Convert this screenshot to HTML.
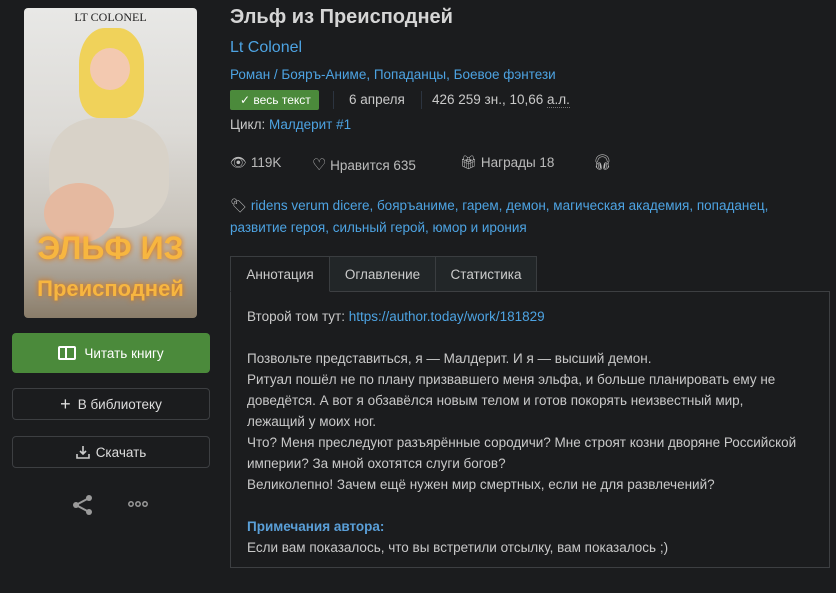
<!DOCTYPE html>
<html><head><meta charset="utf-8"><style>
*{margin:0;padding:0;box-sizing:border-box}
body{width:836px;height:593px;background:#1b1c1e;font-family:"Liberation Sans",sans-serif;color:#c9c9c9;position:relative;overflow:hidden;font-size:13.5px}
.a{position:absolute;white-space:nowrap}
a{color:#4da3e2;text-decoration:none}
.cover{left:24px;top:8px;width:173px;height:310px;border-radius:4px;background:linear-gradient(180deg,#e8e8e6 0%,#dcdad6 40%,#c9c4bc 70%,#8a7d6a 100%);overflow:hidden}
.btn{position:absolute;left:12px;width:198px;border-radius:4px;display:flex;align-items:center;justify-content:center;font-size:13.5px;color:#ddd}
.tab{position:absolute;top:256px;height:36px;border:1px solid #3a3d40;display:flex;align-items:center;justify-content:center;font-size:13.5px;color:#ccc}
.box{position:absolute;left:230px;top:291px;width:600px;height:277px;border:1px solid #3d3f42;padding:14px 16px;font-size:13.5px;line-height:21px;color:#c9c9c9}
</style></head><body>
<div class="a cover">
 <div style="position:absolute;top:2px;width:100%;text-align:center;font-family:'Liberation Serif',serif;font-size:12px;color:#222">LT COLONEL</div>
 <div style="position:absolute;left:55px;top:20px;width:65px;height:90px;border-radius:40% 40% 30% 30%;background:#f0d25a"></div>
 <div style="position:absolute;left:66px;top:40px;width:40px;height:42px;border-radius:50%;background:#f3c9b0"></div>
 <div style="position:absolute;left:25px;top:110px;width:120px;height:110px;border-radius:40%;background:#d8d2c8"></div>
 <div style="position:absolute;left:20px;top:175px;width:70px;height:60px;border-radius:50%;background:#e5b9a0"></div>
 <div style="position:absolute;top:222px;width:100%;text-align:center;font-size:32px;font-weight:bold;color:#f7b640;text-shadow:0 0 6px #e07000;line-height:36px">ЭЛЬФ ИЗ</div>
 <div style="position:absolute;top:268px;width:100%;text-align:center;font-size:22px;font-weight:bold;color:#f7b640;text-shadow:0 0 6px #e07000">Преисподней</div>
</div>
<div class="btn" style="top:333px;height:40px;background:#4b8a3b;color:#fff"><span style="display:inline-block;width:18px;height:14px;border:2px solid #fff;border-radius:2px;margin-right:8px;position:relative"><span style="position:absolute;left:5px;top:-2px;width:2px;height:14px;background:#fff"></span></span>Читать книгу</div>
<div class="btn" style="top:388px;height:32px;border:1px solid #3d3f42"><span style="font-size:18px;margin-right:7px">+</span>В библиотеку</div>
<div class="btn" style="top:436px;height:32px;border:1px solid #3d3f42"><svg width="14" height="14" viewBox="0 0 14 14" style="margin-right:6px"><path d="M7 1v8M4 6l3 3 3-3M1 9v4h12V9" stroke="#ccc" stroke-width="1.6" fill="none"/></svg>Скачать</div>
<svg class="a" style="left:72px;top:494px" width="22" height="22" viewBox="0 0 22 22"><circle cx="17" cy="4" r="3" fill="#9a9a9a"/><circle cx="4" cy="11" r="3" fill="#9a9a9a"/><circle cx="17" cy="18" r="3" fill="#9a9a9a"/><path d="M17 4L4 11l13 7" stroke="#9a9a9a" stroke-width="2" fill="none"/></svg>
<svg class="a" style="left:128px;top:500px" width="20" height="8" viewBox="0 0 20 8"><circle cx="3" cy="4" r="2.2" fill="none" stroke="#9a9a9a" stroke-width="1.5"/><circle cx="10" cy="4" r="2.2" fill="none" stroke="#9a9a9a" stroke-width="1.5"/><circle cx="17" cy="4" r="2.2" fill="none" stroke="#9a9a9a" stroke-width="1.5"/></svg>

<div class="a" style="left:230px;top:6px;font-size:20px;font-weight:bold;color:#d5d5d5">Эльф из Преисподней</div>
<div class="a" style="left:230px;top:39px;font-size:16px"><a>Lt Colonel</a></div>
<div class="a" style="left:230px;top:67px"><a>Роман / Бояръ-Аниме, Попаданцы, Боевое фэнтези</a></div>
<div class="a" style="left:230px;top:90px;width:89px;height:20px;background:#4b8a3b;border-radius:2px;color:#fff;font-size:12px;line-height:20px;padding-left:10px">✓ весь текст</div>
<div class="a" style="left:333px;top:91px;width:1px;height:18px;background:#2c3440"></div>
<div class="a" style="left:349px;top:92px">6 апреля</div>
<div class="a" style="left:421px;top:91px;width:1px;height:18px;background:#2c3440"></div>
<div class="a" style="left:432px;top:92px">426 259 зн., 10,66 <span style="border-bottom:1px dotted #777">а.л.</span></div>
<div class="a" style="left:230px;top:117px">Цикл: <a>Малдерит #1</a></div>
<div class="a" style="left:230px;top:155px;color:#bbb">👁︎ 119K</div>
<div class="a" style="left:312px;top:155px;color:#bbb"><span style="font-size:16px">♡</span> Нравится  635</div>
<div class="a" style="left:460px;top:155px;color:#bbb">🎁︎ Награды 18</div>
<div class="a" style="left:593px;top:153px;color:#bbb;font-size:15px">🎧︎</div>
<div class="a" style="left:230px;top:195px;line-height:22px"><span style="color:#bbb">🏷︎</span> <a>ridens verum dicere, бояръаниме, гарем, демон, магическая академия, попаданец,</a><br><a>развитие героя, сильный герой, юмор и ирония</a></div>

<div class="tab" style="left:230px;width:100px;background:#1b1c1e;border-bottom-color:#1b1c1e;z-index:2">Аннотация</div>
<div class="tab" style="left:329px;width:107px;background:#222628">Оглавление</div>
<div class="tab" style="left:435px;width:102px;background:#222628">Статистика</div>
<div class="box">
Второй том тут: <a>https://author.today/work/181829</a><br><br>
Позвольте представиться, я — Малдерит. И я — высший демон.<br>
Ритуал пошёл не по плану призвавшего меня эльфа, и больше планировать ему не<br>доведётся. А вот я обзавёлся новым телом и готов покорять неизвестный мир,<br>лежащий у моих ног.<br>
Что? Меня преследуют разъярённые сородичи? Мне строят козни дворяне Российской<br>империи? За мной охотятся слуги богов?<br>
Великолепно! Зачем ещё нужен мир смертных, если не для развлечений?<br><br>
<b style="color:#5a9fd8">Примечания автора:</b><br>
Если вам показалось, что вы встретили отсылку, вам показалось ;)
</div>
</body></html>
